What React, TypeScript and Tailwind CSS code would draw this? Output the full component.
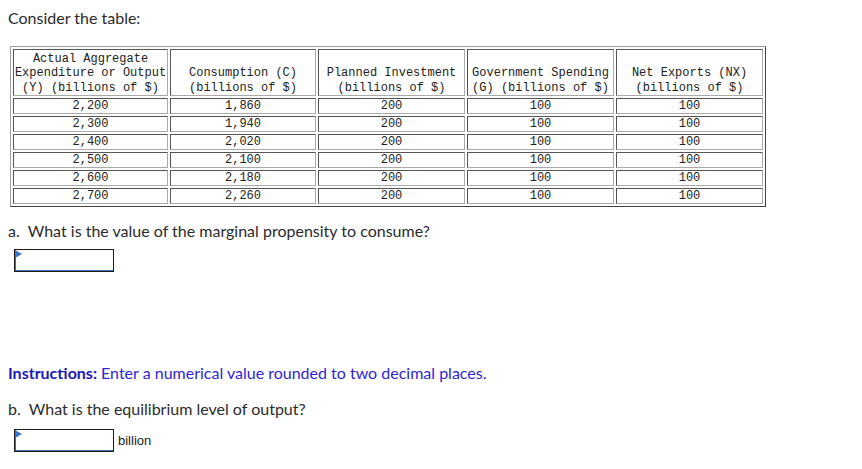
import React from 'react';

const headers = [
  ['Actual Aggregate', 'Expenditure or Output', '(Y) (billions of $)'],
  ['Consumption (C)', '(billions of $)'],
  ['Planned Investment', '(billions of $)'],
  ['Government Spending', '(G) (billions of $)'],
  ['Net Exports (NX)', '(billions of $)'],
];

const rows = [
  ['2,200', '1,860', '200', '100', '100'],
  ['2,300', '1,940', '200', '100', '100'],
  ['2,400', '2,020', '200', '100', '100'],
  ['2,500', '2,100', '200', '100', '100'],
  ['2,600', '2,180', '200', '100', '100'],
  ['2,700', '2,260', '200', '100', '100'],
];

const widths = ['w-[155px]', 'w-[146px]', 'w-[147px]', 'w-[147px]', 'w-[147px]'];

function AnswerBox() {
  return (
    <div className="relative h-[23px] w-[100px] border border-[#1b1b1b] bg-white shadow-[inset_1px_-1px_0_#3b6fb8]">
      <div className="absolute left-0 top-0 h-0 w-0 border-l-[7px] border-t-[4px] border-b-[4px] border-l-[#3b74c9] border-t-transparent border-b-transparent" />
    </div>
  );
}

export default function App() {
  return (
    <div className="min-h-screen bg-white px-[8px] pt-[9px] text-[#2b2b2b] font-['Lato','Open_Sans',sans-serif]">
      <p className="text-[16px] leading-[18px]">Consider the table:</p>

      <table className="mt-[19px] ml-[2px] border-separate border-spacing-[2px] border border-t-[#a0a0a0] border-l-[#a0a0a0] border-r-[#444] border-b-[#444] font-['Liberation_Mono',monospace] text-[12px] text-[#222]">
        <thead>
          <tr>
            {headers.map((lines, i) => (
              <th
                key={i}
                className={`${widths[i]} h-[47px] border border-t-[#555] border-l-[#555] border-r-[#aaa] border-b-[#aaa] p-0 text-center align-bottom font-normal leading-[14.5px]`}
              >
                {lines.map((l) => (
                  <div key={l}>{l}</div>
                ))}
              </th>
            ))}
          </tr>
        </thead>
        <tbody>
          {rows.map((r, ri) => (
            <tr key={ri}>
              {r.map((v, ci) => (
                <td
                  key={ci}
                  className="h-[16px] border border-t-[#555] border-l-[#555] border-r-[#aaa] border-b-[#aaa] p-0 text-center leading-[14px]"
                >
                  {v}
                </td>
              ))}
            </tr>
          ))}
        </tbody>
      </table>

      <p className="mt-[15px] text-[16px] leading-[18px]">a.&nbsp; What is the value of the marginal propensity to consume?</p>
      <div className="mt-[9px] ml-[6px]">
        <AnswerBox />
      </div>

      <p className="mt-[92px] text-[16px] leading-[18px] text-[#2f25d4]">
        <span className="font-bold text-[#1c17b8]">Instructions:</span> Enter a numerical value rounded to two decimal places.
      </p>

      <p className="mt-[18px] text-[16px] leading-[18px]">b.&nbsp; What is the equilibrium level of output?</p>
      <div className="mt-[11px] ml-[6px] flex items-center gap-[4px]">
        <AnswerBox />
        <span className="font-['Liberation_Sans',sans-serif] text-[13px] text-[#222]">billion</span>
      </div>
    </div>
  );
}
